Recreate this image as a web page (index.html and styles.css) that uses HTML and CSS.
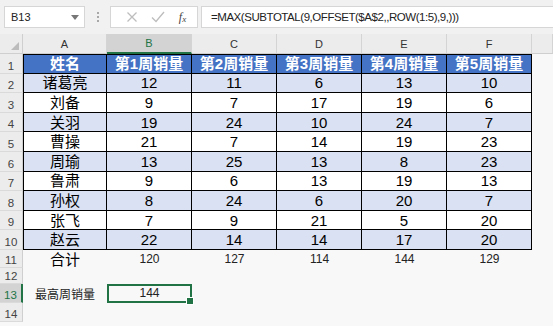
FILE: index.html
```html
<!DOCTYPE html>
<html lang="zh-CN">
<head>
    <meta charset="UTF-8">
    <title>最高周销量</title>
    <link rel="stylesheet" href="styles.css">
</head>
<body>
    <div class="toolbar">
        <div class="namebox">
            <span>B13</span>
            <svg class="caret" width="8" height="5" viewBox="0 0 8 5"><path d="M0 0H8L4 5Z" fill="#777"/></svg>
        </div>
        <div class="grip"><i></i><i></i><i></i></div>
        <div class="fxbox">
            <svg width="12" height="12" viewBox="0 0 12 12"><path d="M1.5 1.5L10.5 10.5M10.5 1.5L1.5 10.5" stroke="#bdbdbd" stroke-width="1.3"/></svg>
            <svg width="14" height="12" viewBox="0 0 14 12"><path d="M1 6.5L5 10.5L13 1" stroke="#bdbdbd" stroke-width="1.3" fill="none"/></svg>
            <span class="fx">f<sub>x</sub></span>
        </div>
        <div class="formula">=MAX(SUBTOTAL(9,OFFSET($A$2,,ROW(1:5),9,)))</div>
    </div>

    <div class="sheet">
        <div class="corner"></div>
        <div class="ch">A</div>
        <div class="ch sel">B</div>
        <div class="ch">C</div>
        <div class="ch">D</div>
        <div class="ch">E</div>
        <div class="ch">F</div>
        <div class="ch"></div>

        <div class="rh">1</div>
        <div class="t head l">姓名</div>
        <div class="t head">第1周销量</div>
        <div class="t head">第2周销量</div>
        <div class="t head">第3周销量</div>
        <div class="t head">第4周销量</div>
        <div class="t head">第5周销量</div>
        <div class="c"></div>

        <div class="rh">2</div>
        <div class="t alt l">诸葛亮</div>
        <div class="t alt">12</div>
        <div class="t alt">11</div>
        <div class="t alt">6</div>
        <div class="t alt">13</div>
        <div class="t alt">10</div>
        <div class="c"></div>

        <div class="rh">3</div>
        <div class="t l">刘备</div>
        <div class="t">9</div>
        <div class="t">7</div>
        <div class="t">17</div>
        <div class="t">19</div>
        <div class="t">6</div>
        <div class="c"></div>

        <div class="rh">4</div>
        <div class="t alt l">关羽</div>
        <div class="t alt">19</div>
        <div class="t alt">24</div>
        <div class="t alt">10</div>
        <div class="t alt">24</div>
        <div class="t alt">7</div>
        <div class="c"></div>

        <div class="rh">5</div>
        <div class="t l">曹操</div>
        <div class="t">21</div>
        <div class="t">7</div>
        <div class="t">14</div>
        <div class="t">19</div>
        <div class="t">23</div>
        <div class="c"></div>

        <div class="rh">6</div>
        <div class="t alt l">周瑜</div>
        <div class="t alt">13</div>
        <div class="t alt">25</div>
        <div class="t alt">13</div>
        <div class="t alt">8</div>
        <div class="t alt">23</div>
        <div class="c"></div>

        <div class="rh">7</div>
        <div class="t l">鲁肃</div>
        <div class="t">9</div>
        <div class="t">6</div>
        <div class="t">13</div>
        <div class="t">19</div>
        <div class="t">13</div>
        <div class="c"></div>

        <div class="rh">8</div>
        <div class="t alt l">孙权</div>
        <div class="t alt">8</div>
        <div class="t alt">24</div>
        <div class="t alt">6</div>
        <div class="t alt">20</div>
        <div class="t alt">7</div>
        <div class="c"></div>

        <div class="rh">9</div>
        <div class="t l">张飞</div>
        <div class="t">7</div>
        <div class="t">9</div>
        <div class="t">21</div>
        <div class="t">5</div>
        <div class="t">20</div>
        <div class="c"></div>

        <div class="rh">10</div>
        <div class="t alt l">赵云</div>
        <div class="t alt">22</div>
        <div class="t alt">14</div>
        <div class="t alt">14</div>
        <div class="t alt">17</div>
        <div class="t alt">20</div>
        <div class="c"></div>

        <div class="rh">11</div>
        <div class="c big">合计</div>
        <div class="c">120</div>
        <div class="c">127</div>
        <div class="c">114</div>
        <div class="c">144</div>
        <div class="c">129</div>
        <div class="c"></div>

        <div class="rh">12</div>
        <div class="c"></div>
        <div class="c"></div>
        <div class="c"></div>
        <div class="c"></div>
        <div class="c"></div>
        <div class="c"></div>
        <div class="c"></div>

        <div class="rh sel">13</div>
        <div class="c">最高周销量</div>
        <div class="c active">144</div>
        <div class="c"></div>
        <div class="c"></div>
        <div class="c"></div>
        <div class="c"></div>
        <div class="c"></div>

        <div class="rh">14</div>
        <div class="c"></div>
        <div class="c"></div>
        <div class="c"></div>
        <div class="c"></div>
        <div class="c"></div>
        <div class="c"></div>
        <div class="c"></div>
    </div>
</body>
</html>
```

FILE: styles.css
```css
* {
    box-sizing: border-box;
}
body {
    margin: 0;
    width: 553px;
    height: 326px;
    overflow: hidden;
    background: #f8f8f8;
    font-family: "Liberation Sans", "Noto Sans CJK SC", sans-serif;
    color: #000;
}
.toolbar {
    height: 34px;
    background: #f1f1f1;
    display: flex;
    align-items: center;
    padding: 0 0 0 4px;
}
.namebox {
    width: 81px;
    height: 22px;
    background: #fff;
    border: 1px solid #d6d6d6;
    display: flex;
    align-items: center;
    justify-content: space-between;
    padding: 0 5px 0 6px;
    font-size: 11px;
    color: #222;
}
.grip {
    width: 25px;
    display: flex;
    flex-direction: column;
    align-items: center;
    gap: 2px;
}
.grip i {
    width: 2px;
    height: 2px;
    background: #a8a8a8;
}
.fxbox {
    width: 88px;
    height: 22px;
    background: #fff;
    border: 1px solid #d6d6d6;
    display: flex;
    align-items: center;
    justify-content: space-around;
    padding: 0 4px 0 8px;
}
.fx {
    font-family: "Liberation Serif", serif;
    font-style: italic;
    font-size: 12px;
    color: #444;
}
.fx sub {
    font-size: 9px;
    vertical-align: -1px;
}
.formula {
    flex: 1;
    height: 22px;
    margin-left: 3px;
    background: #fff;
    border: 1px solid #d6d6d6;
    border-right: none;
    padding-left: 9px;
    font-size: 11.5px;
    letter-spacing: -0.45px;
    line-height: 20px;
    color: #222;
}
.sheet {
    display: grid;
    grid-template-columns: 23px 84px repeat(5, 85px) 1fr;
    grid-template-rows: 20px repeat(10, 19.6px) 18px 16px 19px 19px 1fr;
    height: 292px;
}
.corner {
    background: #ececec;
    border-right: 1px solid #cfcfcf;
    border-bottom: 1px solid #cfcfcf;
    position: relative;
}
.corner::after {
    content: "";
    position: absolute;
    right: 3px;
    bottom: 3px;
    border-left: 8px solid transparent;
    border-bottom: 8px solid #bcbcbc;
}
.ch {
    background: #ececec;
    border-right: 1px solid #d4d4d4;
    border-bottom: 1px solid #cfcfcf;
    display: flex;
    align-items: center;
    justify-content: center;
    font-size: 11px;
    color: #333;
}
.ch.sel {
    background: #d3d3d3;
    color: #217346;
    border-bottom: 2px solid #217346;
}
.rh {
    background: #ececec;
    border-right: 1px solid #cfcfcf;
    border-bottom: 1px solid #dadada;
    display: flex;
    align-items: flex-end;
    justify-content: center;
    padding-bottom: 1px;
    font-size: 11.5px;
    color: #444;
}
.rh.sel {
    background: #d3d3d3;
    color: #217346;
    border-right: 2px solid #217346;
}
.c {
    display: flex;
    align-items: center;
    justify-content: center;
    font-size: 12px;
    color: #222;
}
.c.big {
    font-size: 15px;
    color: #000;
}
.c.active {
    border: 2px solid #217346;
    position: relative;
}
.c.active::after {
    content: "";
    position: absolute;
    right: -4px;
    bottom: -4px;
    width: 6px;
    height: 6px;
    background: #217346;
    border: 1px solid #fff;
}
.t {
    background: #fff;
    border-right: 1px solid #000;
    border-bottom: 1px solid #000;
    display: flex;
    align-items: center;
    justify-content: center;
    font-size: 15px;
    line-height: 1;
}
.t.l {
    border-left: 1px solid #000;
}
.t.head {
    background: #4472c4;
    color: #fff;
    font-weight: bold;
    border-top: 1px solid #000;
}
.t.alt {
    background: #d9e1f2;
}
```
